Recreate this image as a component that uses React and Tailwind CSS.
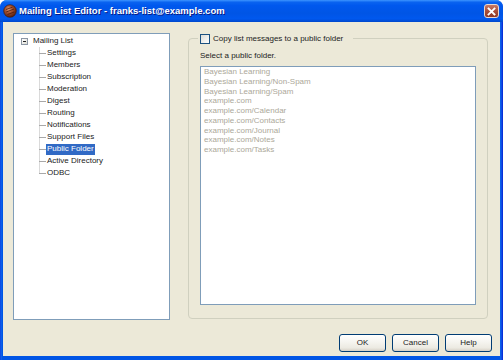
import React from "react";

const treeChildren = [
  "Settings",
  "Members",
  "Subscription",
  "Moderation",
  "Digest",
  "Routing",
  "Notifications",
  "Support Files",
  "Public Folder",
  "Active Directory",
  "ODBC",
];

const folders = [
  "Bayesian Learning",
  "Bayesian Learning/Non-Spam",
  "Bayesian Learning/Spam",
  "example.com",
  "example.com/Calendar",
  "example.com/Contacts",
  "example.com/Journal",
  "example.com/Notes",
  "example.com/Tasks",
];

function Connector({ last }) {
  return (
    <svg width="7" height="12" viewBox="0 0 7 12" className="shrink-0">
      <line x1="0.5" y1="0" x2="0.5" y2={last ? 6.5 : 12} stroke="#DADADA" strokeWidth="1" />
      <line x1="0" y1="6.5" x2="7" y2="6.5" stroke="#A8A8A8" strokeWidth="1" />
    </svg>
  );
}

function AppIcon() {
  return (
    <svg width="14" height="14" viewBox="0 0 14 14" className="shrink-0">
      <defs>
        <radialGradient id="ball" cx="40%" cy="35%" r="65%">
          <stop offset="0%" stopColor="#E0A080" />
          <stop offset="45%" stopColor="#A4502E" />
          <stop offset="100%" stopColor="#5A200E" />
        </radialGradient>
      </defs>
      <circle cx="7" cy="7" r="6.3" fill="url(#ball)" stroke="#3A1A0E" strokeWidth="0.6" />
      <path d="M3 5.5 L9.5 3.2 M3.2 8 L11 5 M4.5 10.5 L11.2 8" stroke="#4A1A08" strokeWidth="0.8" fill="none" />
    </svg>
  );
}

function XpButton({ children }) {
  return (
    <button className="w-[47px] h-[18px] rounded-[3px] border border-[#003C74] bg-[linear-gradient(to_bottom,#FFFFFF_0%,#F5F4EF_45%,#ECEAE2_80%,#D6D0C5_100%)] text-[8px] leading-none text-[#222] flex items-center justify-center">
      {children}
    </button>
  );
}

export default function App() {
  return (
    <div className="w-[503px] h-[360px] bg-white font-['Liberation_Sans',Arial,sans-serif] text-[#222]">
      <div className="w-full h-full flex flex-col rounded-t-[7px] overflow-hidden bg-[linear-gradient(to_right,#0831D9_0px,#166AEE_1px,#0055E5_2px,#0055E5_500px,#166AEE_501px,#0831D9_502px)]">
        {/* Title bar */}
        <div className="h-[22px] shrink-0 flex items-center pl-[3px] pr-[4px] bg-[linear-gradient(to_bottom,#3D95FF_0%,#0A63F0_10%,#0058EE_25%,#0055E5_60%,#0058EE_85%,#0048CC_100%)]">
          <AppIcon />
          <span className="ml-[2px] text-[9.5px] font-bold text-white leading-none [text-shadow:1px_1px_0_#0A1883]">
            Mailing List Editor - franks-list@example.com
          </span>
          <div className="flex-1" />
          <div className="w-[15px] h-[14px] rounded-[3px] border border-[#E8D8D0] bg-[linear-gradient(to_bottom,#C87A66_0%,#A84E3A_50%,#8E3826_100%)] flex items-center justify-center">
            <svg width="9" height="9" viewBox="0 0 9 9">
              <path d="M1.5 1.5 L7.5 7.5 M7.5 1.5 L1.5 7.5" stroke="#FFFFFF" strokeWidth="1.8" strokeLinecap="square" />
            </svg>
          </div>
        </div>

        {/* Client area */}
        <div className="flex-1 mx-[3px] mb-[4px] bg-[#ECE9D8] flex flex-col">
          <div className="flex pl-[10px] pt-[11px]">
            {/* Tree */}
            <div className="w-[157px] h-[287px] border border-[#7F9DB9] bg-white pl-[7px] pt-[1px] text-[8px]">
              <div className="flex items-center h-[12px]">
                <div className="w-[7px] h-[7px] border border-[#8C97A5] bg-[linear-gradient(135deg,#FFFFFF,#DCDCD4)] flex items-center justify-center">
                  <div className="w-[3px] h-[1px] bg-[#222]" />
                </div>
                <span className="ml-[5px] leading-none">Mailing List</span>
              </div>
              {treeChildren.map((c, i) => (
                <div key={c} className="flex items-center h-[12px] pl-[18px]">
                  <Connector last={i === treeChildren.length - 1} />
                  <span
                    className={
                      "px-[1px] h-[11px] flex items-center leading-none " +
                      (c === "Public Folder" ? "bg-[#316AC5] text-white" : "")
                    }
                  >
                    {c}
                  </span>
                </div>
              ))}
            </div>

            {/* Group box */}
            <div className="ml-[18px] mt-[5px] w-[300px] h-[281px] border border-[#D0D0BF] rounded-[4px] px-[11px]">
              <div className="-mt-[6px] -ml-[2px] w-fit h-[12px] bg-[#ECE9D8] flex items-center pl-[2px] pr-[10px]">
                <div className="w-[10px] h-[10px] border border-[#1C5180] bg-[linear-gradient(135deg,#DCDCD7,#FFFFFF)]" />
                <span className="ml-[3px] text-[8px] leading-none">Copy list messages to a public folder</span>
              </div>
              <div className="mt-[5px] h-[12px] flex items-center text-[8px] leading-none">Select a public folder.</div>
              <div className="mt-[4px] w-[276px] h-[239px] border border-[#7F9DB9] bg-white pl-[3px] text-[8px] leading-[9.75px] text-[#ACA899]">
                {folders.map((f) => (
                  <div key={f}>{f}</div>
                ))}
              </div>
            </div>
          </div>

          {/* Buttons */}
          <div className="mt-[14px] flex justify-end gap-[6px] pr-[8px]">
            <XpButton>OK</XpButton>
            <XpButton>Cancel</XpButton>
            <XpButton>Help</XpButton>
          </div>
        </div>
      </div>
    </div>
  );
}
